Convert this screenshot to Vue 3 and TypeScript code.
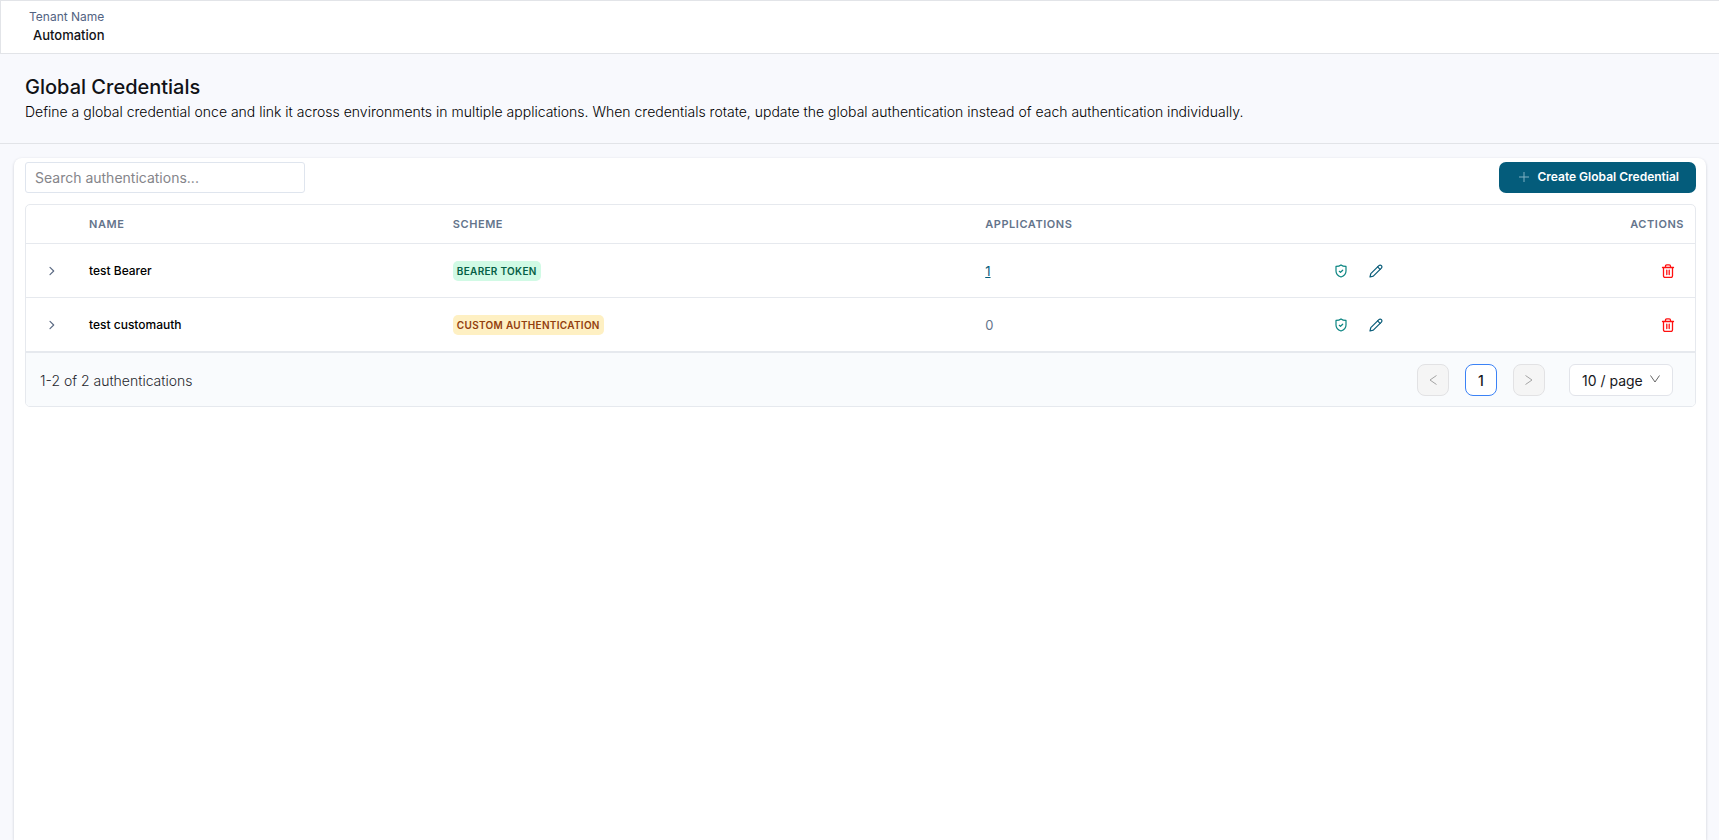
<script setup lang="ts">
import { ref, computed } from 'vue'

interface Credential {
  id: number
  name: string
  scheme: string
  tone: 'green' | 'amber'
  applications: number
}

const credentials: Credential[] = [
  { id: 1, name: 'test Bearer', scheme: 'BEARER TOKEN', tone: 'green', applications: 1 },
  { id: 2, name: 'test customauth', scheme: 'CUSTOM AUTHENTICATION', tone: 'amber', applications: 0 },
]

const search = ref('')
const pageSize = ref(10)
const rows = computed(() =>
  credentials.filter((c) => c.name.toLowerCase().includes(search.value.toLowerCase())),
)
</script>

<template>
  <div class="page">
    <header class="topbar">
      <div class="tenant-label">Tenant Name</div>
      <div class="tenant-name">Automation</div>
    </header>

    <section class="intro">
      <h1>Global Credentials</h1>
      <p>
        Define a global credential once and link it across environments in multiple applications. When
        credentials rotate, update the global authentication instead of each authentication individually.
      </p>
    </section>

    <main class="card">
      <div class="toolbar">
        <input v-model="search" class="search" type="text" placeholder="Search authentications..." aria-label="Search authentications" />
        <button class="create" type="button">
          <svg width="10" height="10" viewBox="0 0 10 10" aria-hidden="true">
            <path d="M5 0v10M0 5h10" fill="none" stroke="#7fb0c3" stroke-width="1" />
          </svg>
          <span>Create Global Credential</span>
        </button>
      </div>

      <div class="panel">
        <table>
          <colgroup>
            <col class="c-expand" />
            <col class="c-name" />
            <col class="c-scheme" />
            <col class="c-apps" />
            <col class="c-edit" />
            <col />
          </colgroup>
          <thead>
            <tr>
              <th></th>
              <th scope="col">NAME</th>
              <th scope="col">SCHEME</th>
              <th scope="col">APPLICATIONS</th>
              <th></th>
              <th scope="col" class="right">ACTIONS</th>
            </tr>
          </thead>
          <tbody>
            <tr v-for="row in rows" :key="row.id">
              <td class="expand-cell">
                <button class="icon" type="button" :aria-label="`Expand ${row.name}`">
                  <svg width="14" height="14" viewBox="0 0 14 14" aria-hidden="true">
                    <path d="M5 3.300L8.700 7 5 10.700" fill="none" stroke="#5c6b84" stroke-width="1.200" stroke-linecap="round" stroke-linejoin="round" />
                  </svg>
                </button>
              </td>
              <td class="name">{{ row.name }}</td>
              <td><span class="tag" :class="row.tone">{{ row.scheme }}</span></td>
              <td class="count">
                <a v-if="row.applications" href="#">{{ row.applications }}</a>
                <span v-else>{{ row.applications }}</span>
              </td>
              <td>
                <div class="tools">
                  <button class="icon" type="button" :aria-label="`Verify ${row.name}`">
                    <svg width="14" height="14" viewBox="0 0 14 14" fill="none" stroke="#0b8582" stroke-width="1.200" stroke-linecap="round" stroke-linejoin="round" aria-hidden="true">
                      <path d="M7 .900C5.700 1.900 4 2.300 2 2.400V7c0 3 2 5 5 6 3-1 5-3 5-6V2.400C10 2.300 8.300 1.900 7 .900z" />
                      <path d="M5.300 7.300l1.200 1L8.700 6.200" />
                    </svg>
                  </button>
                  <button class="icon" type="button" :aria-label="`Edit ${row.name}`">
                    <svg width="14" height="14" viewBox="0 0 14 14" fill="none" stroke="#0a5c79" stroke-width="1.200" stroke-linecap="round" stroke-linejoin="round" aria-hidden="true">
                      <path d="M1 13l.800-3.300L9.900 1.600a1.750 1.750 0 0 1 2.500 2.500L4.300 12.200z" />
                      <path d="M8.600 2.900l2.500 2.500" />
                    </svg>
                  </button>
                </div>
              </td>
              <td class="delete-cell">
                <button class="icon" type="button" :aria-label="`Delete ${row.name}`">
                  <svg width="14" height="14" viewBox="0 0 14 14" fill="none" stroke="#ff1010" stroke-width="1.300" stroke-linecap="round" stroke-linejoin="round" aria-hidden="true">
                    <path d="M1.500 3.500h11M2.500 3.500V12q0 1.400 1.400 1.400h6.200q1.400 0 1.400-1.400V3.500M4.500 3.300V2.200Q4.500.900 5.800.900h2.400Q9.500.900 9.500 2.200v1.100" />
                    <path d="M5.800 6.200v4.300M8.200 6.200v4.300" />
                  </svg>
                </button>
              </td>
            </tr>
          </tbody>
        </table>

        <footer class="pager">
          <span class="summary">1-2 of 2 authentications</span>
          <nav aria-label="Pagination">
            <button class="step" type="button" disabled aria-label="Previous page">
              <svg width="12" height="12" viewBox="0 0 12 12" aria-hidden="true">
                <path d="M9.500 1.500L3 6l6.500 4.500" fill="none" stroke="#a3a3a3" stroke-width="1" />
              </svg>
            </button>
            <button class="step current" type="button" aria-current="page">1</button>
            <button class="step" type="button" disabled aria-label="Next page">
              <svg width="12" height="12" viewBox="0 0 12 12" aria-hidden="true">
                <path d="M2.500 1.500L9 6l-6.500 4.500" fill="none" stroke="#a3a3a3" stroke-width="1" />
              </svg>
            </button>
            <div class="size">
              <select v-model="pageSize" aria-label="Rows per page">
                <option :value="10">10 / page</option>
                <option :value="20">20 / page</option>
                <option :value="50">50 / page</option>
              </select>
              <svg width="12" height="12" viewBox="0 0 12 12" aria-hidden="true">
                <path d="M1.500 2.500L6 9l4.500-6.500" fill="none" stroke="#666" stroke-width="1" />
              </svg>
            </div>
          </nav>
        </footer>
      </div>
    </main>
  </div>
</template>

<style>
body {
  background: #f8f9fd;
}
</style>

<style scoped>
* {
  box-sizing: border-box;
}

.page {
  display: flex;
  flex-direction: column;
  min-height: 100vh;
  font-family: Inter, 'Open Sans', sans-serif;
  font-size: 14px;
  color: #111216;
}

button,
input,
select {
  font-family: inherit;
}

.topbar {
  padding: 6px 28px 8px;
  background: #fff;
  border: 1px solid #e2e4e8;
  border-right: 0;
}

.tenant-label {
  font-size: 12px;
  line-height: 19px;
  color: #526382;
}

.tenant-name {
  padding-left: 4px;
  font-size: 13px;
  font-weight: 500;
  line-height: 19px;
}

.intro {
  padding: 20px 25px 20px;
  border-bottom: 1px solid #e2e4e8;
}

h1 {
  margin: 0;
  font-size: 20px;
  line-height: 27px;
  font-weight: 500;
}

p {
  margin: 0;
  font-weight: 300;
  line-height: 22px;
  color: #000;
}

.card {
  display: flex;
  flex: 1;
  flex-direction: column;
  gap: 11px;
  margin: 14px 13px 0 14px;
  padding: 4px 10px 0 11px;
  background: #fff;
  border-radius: 8px 8px 0 0;
  box-shadow: 0 1px 3px rgba(20, 30, 50, 0.2);
}

.toolbar {
  display: flex;
  justify-content: space-between;
}

.search {
  width: 280px;
  height: 31px;
  padding: 0 9px;
  font-size: 14px;
  font-weight: 400;
  border: 1px solid #dfe5ee;
  border-radius: 3px;
}

.search::placeholder {
  color: #85858a;
}

.create {
  display: flex;
  align-items: center;
  gap: 8px;
  height: 31px;
  padding: 0 17px 2px 20px;
  font-size: 12px;
  font-weight: 600;
  color: #fff;
  background: #045c7b;
  border: 0;
  border-radius: 7px;
}

.panel {
  border: 1px solid #e6e9ee;
  border-radius: 5px;
  overflow: hidden;
}

table {
  width: 100%;
  table-layout: fixed;
  border-collapse: separate;
  border-spacing: 0;
}

.c-expand {
  width: 51px;
}

.c-name {
  width: 21.8%;
}

.c-scheme {
  width: 31.9%;
}

.c-apps {
  width: 20.6%;
}

.c-edit {
  width: 6%;
}

th,
td {
  padding: 0 12px;
  text-align: left;
  border-bottom: 1px solid #e6e9ee;
}

th {
  height: 39px;
  font-size: 11px;
  font-weight: 600;
  letter-spacing: 0.05em;
  color: #64748b;
}

td {
  height: 54px;
}

th.right {
  padding-right: 11px;
  text-align: right;
}

.icon {
  display: flex;
  align-items: center;
  justify-content: center;
  width: 24px;
  height: 24px;
  padding: 0;
  background: none;
  border: 0;
}

.expand-cell {
  padding: 0 14px;
}

.name {
  font-size: 12px;
  font-weight: 500;
  color: #000;
}

.tag {
  display: inline-block;
  padding: 0 4px;
  font-size: 10px;
  line-height: 20px;
  font-weight: 600;
  letter-spacing: 0.03em;
  border-radius: 5px;
  vertical-align: middle;
}

.green {
  color: #065f46;
  background: #d1fae5;
}

.amber {
  color: #92400e;
  background: #fef0c3;
}

.count {
  font-size: 13px;
  color: #64748b;
}

.count a {
  color: #045c7b;
}

.tools {
  display: flex;
  gap: 11px;
}

.delete-cell .icon {
  margin-left: auto;
  margin-right: 3px;
}

.pager {
  display: flex;
  align-items: center;
  justify-content: space-between;
  padding: 11px 22px 10px 14px;
  background: #f9fbfd;
  border-top: 1px solid #e6e9ee;
}

.summary {
  font-weight: 300;
  color: #26282e;
}

nav {
  display: flex;
  gap: 16px;
}

.step {
  display: flex;
  align-items: center;
  justify-content: center;
  width: 32px;
  height: 32px;
  padding: 0;
  background: #f5f5f5;
  border: 1px solid #e2e2e4;
  border-radius: 8px;
}

.step.current {
  font-size: 14px;
  font-weight: 500;
  color: #17181c;
  background: #fff;
  border-color: #3b82f6;
}

.size {
  position: relative;
  margin-left: 8px;
}

.size select {
  width: 104px;
  height: 32px;
  padding: 0 12px;
  font-size: 14px;
  font-weight: 400;
  color: #17181c;
  appearance: none;
  background: #fff;
  border: 1px solid #e2e4ea;
  border-radius: 6px;
}

.size svg {
  position: absolute;
  top: 9px;
  right: 12px;
  pointer-events: none;
}
</style>
